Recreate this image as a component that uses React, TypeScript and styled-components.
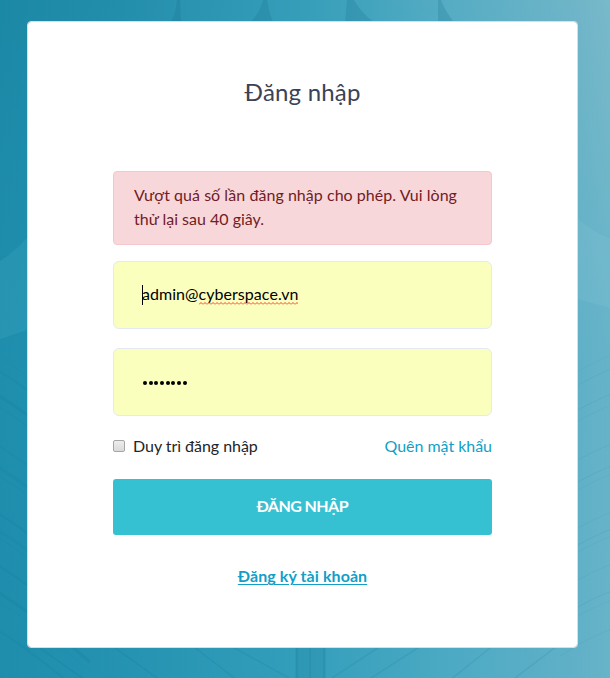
import React from "react";
import styled, { createGlobalStyle } from "styled-components";

const GlobalStyle = createGlobalStyle`
  * { box-sizing: border-box; }
  body {
    margin: 0;
    overflow: hidden;
    font-family: Lato, "Open Sans", sans-serif;
    font-size: 16px;
    line-height: 24px;
    color: #212529;
  }
`;

const Page = styled.main`
  position: relative;
  width: 610px;
  height: 678px;
  padding: 21px 32px 30px 27px;
  overflow: hidden;
`;

const Backdrop = styled.svg`
  position: absolute;
  inset: 0;
  z-index: -1;
`;

const Card = styled.section`
  display: flex;
  flex-direction: column;
  height: 627px;
  padding: 53px 85px 0;
  background: #fff;
  background-clip: padding-box;
  border: 1px solid #d5e0e3;
  border-radius: 4px;
`;

const Fitted = styled.span<{ $spacing: number }>`
  letter-spacing: ${(p) => p.$spacing}px;
  margin-right: ${(p) => -p.$spacing}px;
  white-space: nowrap;
`;

const Title = styled.h1`
  margin: 0 0 62px;
  text-align: center;
  font-size: 24px;
  font-weight: 400;
  line-height: 34px;
  color: #3b4256;
`;

const Alert = styled.div`
  display: flex;
  flex-direction: column;
  height: 74px;
  padding: 11px 20px;
  margin-bottom: 16px;
  color: #721c24;
  background: #f8d7da;
  border: 1px solid #f5c6cb;
  border-radius: 4px;
`;

const Field = styled.div`
  display: flex;
  align-items: center;
  height: 68px;
  padding: 0 28px 2px;
  color: #000;
  background: #faffbd;
  border: 1px solid #e5e9f2;
  border-radius: 6px;

  & + & {
    margin-top: 19px;
  }
`;

const Caret = styled.span`
  width: 1px;
  height: 20px;
  margin-top: 2px;
  margin-right: -1px;
  background: #000;
`;

const Misspelled = styled.span`
  position: relative;
`;

const Squiggle = styled.svg`
  position: absolute;
  left: 0;
  bottom: -2px;
  width: 100%;
  height: 3px;
`;

const Dots = styled.div`
  display: flex;
  gap: 1.7px;
  padding: 4px 0 0 1px;
`;

const Dot = styled.span`
  width: 4px;
  height: 4px;
  border-radius: 50%;
  background: #000;
`;

const Options = styled.div`
  display: flex;
  justify-content: space-between;
  align-items: center;
  height: 24px;
  margin: 18px 0 21px;
`;

const Remember = styled.label`
  display: flex;
  align-items: center;
`;

const Checkbox = styled.input`
  appearance: none;
  width: 12px;
  height: 12px;
  margin: 0 8px 0 0;
  border: 1px solid #a6a6a6;
  border-radius: 2px;
  background: linear-gradient(#ededed, #dadada);
`;

const Link = styled.a<{ $strong?: boolean }>`
  color: #119fc8;
  text-decoration: ${(p) => (p.$strong ? "underline" : "none")};
  text-decoration-thickness: 1px;
  text-underline-offset: 2px;
  font-weight: ${(p) => (p.$strong ? 700 : 400)};
`;

const Submit = styled.button`
  height: 56px;
  padding: 0 0 2px;
  border: 0;
  border-radius: 3px;
  color: #fff;
  background: #36c1d3;
  font: 700 16px/24px Lato, sans-serif;
`;

const Register = styled.div`
  margin-top: 29px;
  text-align: center;
`;

const streaks = [352, 366, 391, 402, 441, 463, 471, 509, 526, 533, 561, 588, 597, 626];

function Background() {
  return (
    <Backdrop width="610" height="678" viewBox="0 0 610 678" aria-hidden="true">
      <defs>
        <linearGradient id="sea">
          <stop offset="0" stopColor="#1b88a6" />
          <stop offset=".2" stopColor="#238eac" />
          <stop offset=".5" stopColor="#369eb9" />
          <stop offset=".75" stopColor="#57adc4" />
          <stop offset=".95" stopColor="#70b5c8" />
          <stop offset="1" stopColor="#79b9ca" />
        </linearGradient>
        <linearGradient id="glow" x2="0" y2="1">
          <stop offset="0" stopColor="#2ba1c4" stopOpacity="0" />
          <stop offset=".55" stopColor="#2ba1c4" stopOpacity=".25" />
          <stop offset="1" stopColor="#2ba1c4" stopOpacity=".22" />
        </linearGradient>
      </defs>
      <rect width="610" height="678" fill="url(#sea)" />
      <rect width="610" height="678" fill="url(#glow)" />
      <g fill="#17708e" opacity=".24">
        <path d="M177 0h3l1 22h-10Q176 12 177 0z M263 0h4q2 13 6 22h-22Q260 12 263 0z M347 0h7q8 14 20 22h-29z M438 0h3q5 13 13 22h-16z" />
      </g>
      <path d="M295 648h31v30h-31z" fill="#17708e" opacity=".14" />
      <path d="M0 261Q16 251 27 238V330L0 339z" fill="#49b6cf" opacity=".2" />
      <path d="M578 219Q592 231 610 239V308L578 299z" fill="#8bc9d5" opacity=".2" />
      <g fill="none" stroke="#126e92">
        {streaks.map((y, i) => (
          <path
            key={y}
            d={`M-10 ${y}Q20 ${y + 15} 90 ${y + 74}`}
            strokeWidth={1 + (i % 3)}
            opacity={0.07 + (i % 4) * 0.025}
          />
        ))}
        {streaks.map((y, i) => (
          <path
            key={`r${y}`}
            d={`M620 ${y}Q590 ${y + 10} 560 ${y + 30}`}
            opacity={0.06 + (i % 3) * 0.02}
          />
        ))}
        <path d="M40 648 85 680M115 648 160 680M185 640 250 690M220 640 300 684M390 640 332 678M430 640 365 682M500 640 450 680M565 640 515 678" strokeWidth="1.5" opacity=".13" />
        <path d="M297 648V678M310 648V678M324 648V678" strokeWidth="2" opacity=".16" />
      </g>
    </Backdrop>
  );
}

export default function App() {
  return (
    <Page>
      <GlobalStyle />
      <Background />
      <Card>
        <Title><Fitted $spacing={0.2}>Đăng nhập</Fitted></Title>
        <Alert role="alert">
          <Fitted $spacing={0.04}>Vượt quá số lần đăng nhập cho phép. Vui lòng</Fitted>
          <Fitted $spacing={0}>thử lại sau 40 giây.</Fitted>
        </Alert>
        <Field>
          <Caret />
          <Fitted $spacing={0.05}>
            admin@
            <Misspelled>
              cyberspace.vn
              <Squiggle>
                <defs>
                  <pattern id="wave" width="4" height="3" patternUnits="userSpaceOnUse">
                    <path d="M0 2.5 2 .5 4 2.5" fill="none" stroke="#ff3b30" />
                  </pattern>
                </defs>
                <rect width="100%" height="3" fill="url(#wave)" />
              </Squiggle>
            </Misspelled>
          </Fitted>
        </Field>
        <Field>
          <Dots>
            {Array.from({ length: 8 }, (_, i) => <Dot key={i} />)}
          </Dots>
        </Field>
        <Options>
          <Remember>
            <Checkbox type="checkbox" />
            <Fitted $spacing={-0.04}>Duy trì đăng nhập</Fitted>
          </Remember>
          <Link><Fitted $spacing={-0.03}>Quên mật khẩu</Fitted></Link>
        </Options>
        <Submit><Fitted $spacing={-0.55}>ĐĂNG NHẬP</Fitted></Submit>
        <Register><Link $strong><Fitted $spacing={0.08}>Đăng ký tài khoản</Fitted></Link></Register>
      </Card>
    </Page>
  );
}
